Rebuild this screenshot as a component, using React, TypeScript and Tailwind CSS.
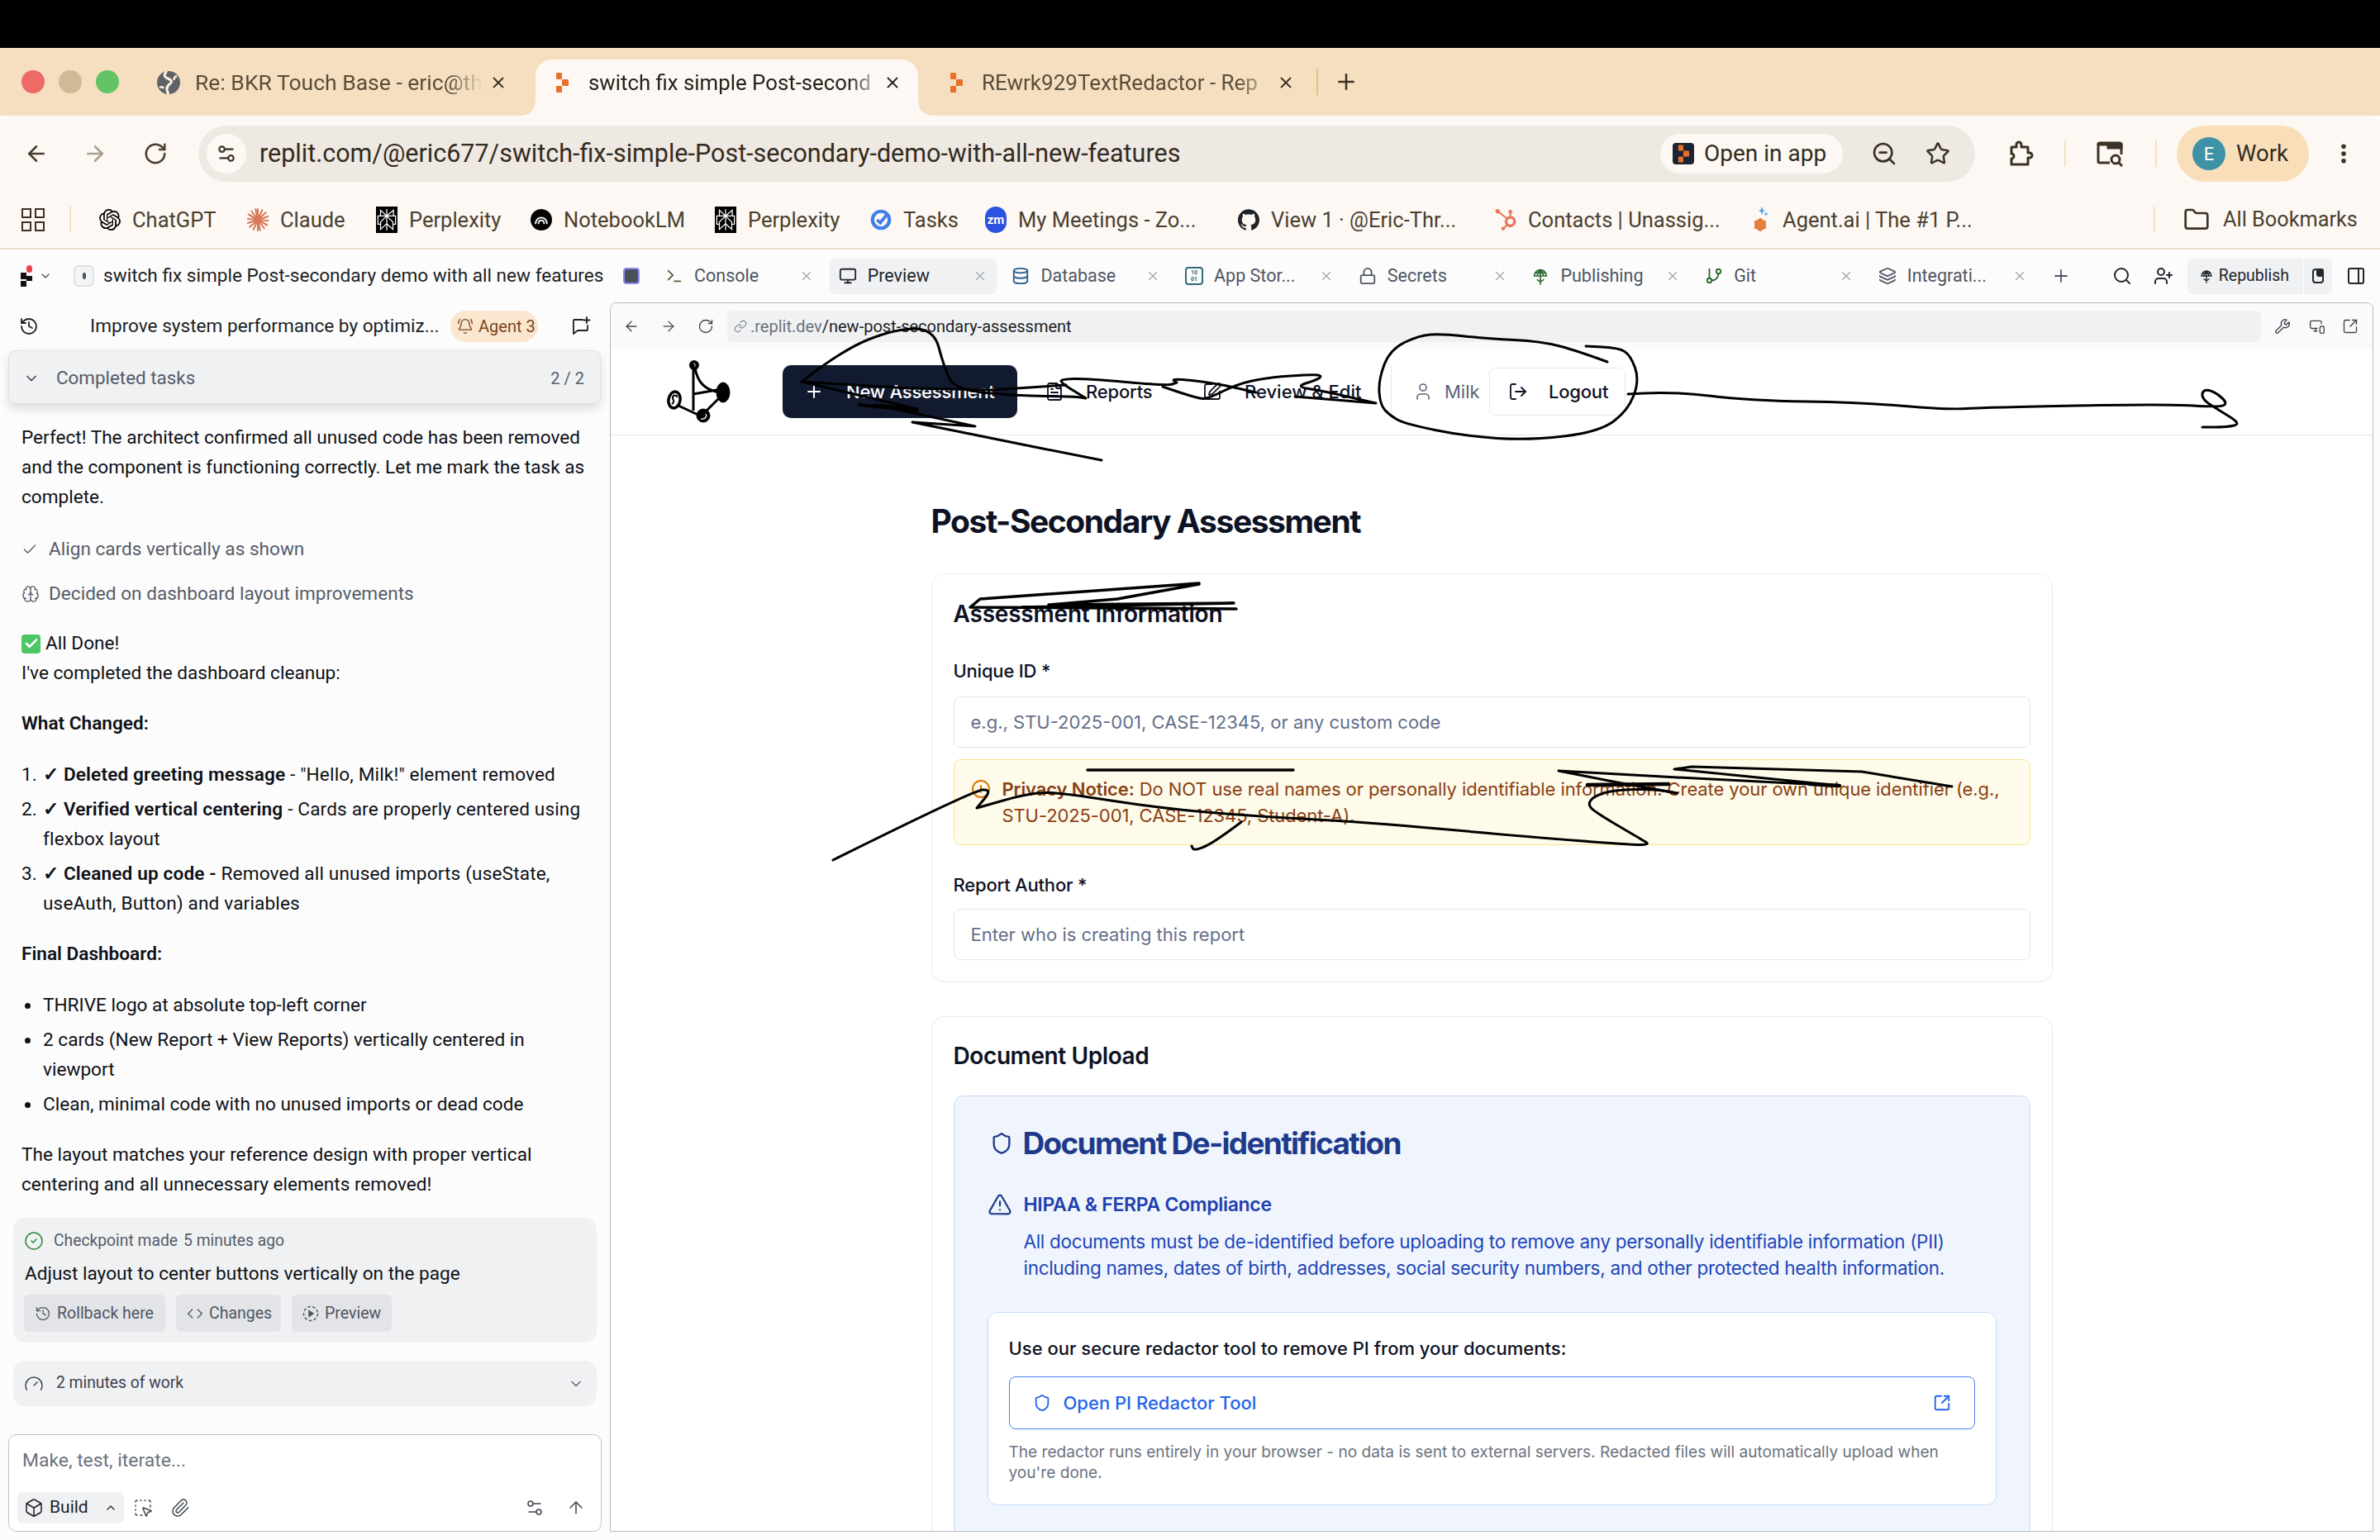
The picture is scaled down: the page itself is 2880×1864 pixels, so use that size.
import React from "react";
import {
  ArrowLeft, ArrowRight, RotateCw, ZoomOut, Star, MoreVertical, Folder, Plus, X, Search, UserPlus, PanelRight,
  History, BellRing, ChevronDown, ChevronUp, Check, Brain, CircleCheck, Code, Gauge, Box,
  SquareDashedMousePointer, Paperclip, ArrowUp, Link, Wrench, MonitorSmartphone, SquareArrowOutUpRight,
  Shield, TriangleAlert, CircleAlert, User, LogOut, FileText, SquarePen, Terminal, Monitor, Database, Lock,
  GitBranch, Layers, Settings2,
} from "lucide-react";
import { SiOpenai, SiGithub, SiHubspot, SiPerplexity } from "react-icons/si";

function smooth(p: number[][]) {
  let d = `M${p[0][0]} ${p[0][1]}`;
  for (let i = 1; i < p.length - 1; i++) {
    const mx = (p[i][0] + p[i + 1][0]) / 2;
    const my = (p[i][1] + p[i + 1][1]) / 2;
    d += ` Q${p[i][0]} ${p[i][1]} ${mx} ${my}`;
  }
  const l = p[p.length - 1];
  return d + ` L${l[0]} ${l[1]}`;
}

const scribbles: { w: number; pts: number[][]; sharp?: boolean }[] = [
  { w: 3, pts: [[1945,438],[1910,425],[1865,413],[1800,410],[1745,404],[1717,406],[1682,423],[1668,460],[1670,490],[1682,503],[1700,513],[1773,528],[1850,533],[1935,523],[1970,497],[1984,460],[1973,430],[1959,421],[1919,419]] },
  { w: 3, pts: [[1970,477],[2019,473],[2117,485],[2254,487],[2356,496],[2405,493],[2622,489],[2686,493],[2696,488],[2680,474],[2666,471],[2664,483],[2686,497],[2712,513],[2695,517],[2665,517]] },
  { sharp: true, w: 3, pts: [[1333,557],[1257,542],[1104,511],[1180,516],[1059,490],[1110,495],[970,462],[1100,470],[1200,472],[1290,466]] },
  { sharp: true, w: 4, pts: [[1040,490],[1110,497]] },
  { w: 3, pts: [[970,462],[1020,423],[1084,398],[1130,398],[1142,443],[1155,472],[1230,479],[1300,480],[1314,482],[1314,482],[1283,463],[1285,459],[1313,458],[1413,467],[1424,463],[1424,463],[1417,458],[1467,463],[1520,475],[1520,475]] },
  { w: 3, pts: [[1407,468],[1450,483],[1463,482],[1497,465],[1533,457],[1590,453],[1600,455],[1593,460],[1567,468],[1600,473],[1665,488],[1665,488],[1567,480]] },
  { sharp: true, w: 3.5, pts: [[1451,706],[1186,725],[1174,735],[1496,737],[1237,735],[1493,730],[1269,732],[1352,725],[1451,707]] },
  { w: 3, pts: [[1008,1041],[1177,957],[1201,955],[1182,978],[1182,978],[1249,959],[1287,960],[1402,978],[1517,988],[1651,995],[1840,1012],[1978,1023],[1996,1022],[1988,1017],[1930,983],[1921,973],[1930,963],[1954,956],[2002,955],[2029,960]] },
  { sharp: true, w: 3, pts: [[2029,960],[1957,947],[1886,933],[2012,940],[2226,951],[2026,931],[2047,928],[2253,934],[2362,952]] },
  { sharp: true, w: 4.5, pts: [[1921,950],[2019,949]] },
  { sharp: true, w: 4.5, pts: [[2190,949],[2226,951]] },
  { sharp: true, w: 3.5, pts: [[1316,932],[1565,932]] },
  { w: 3, pts: [[1502,995],[1469,1020],[1445,1030],[1442,1024]] },
];

function Scribbles() {
  return (
    <svg className="absolute left-0 top-0 pointer-events-none" width="2880" height="1864" viewBox="0 0 2880 1864" fill="none" stroke="#000" strokeLinecap="round" strokeLinejoin="round">
      {scribbles.map((s, i) => (
        <path key={i} d={s.sharp ? "M" + s.pts.map((q) => q.join(" ")).join(" L") : smooth(s.pts)} strokeWidth={s.w} />
      ))}
    </svg>
  );
}

function ReplitMark({ color = "#e8702a", className = "w-[16px] h-[24px]" }: { color?: string; className?: string }) {
  return (
    <svg viewBox="0 0 16 24" className={className} fill={color}>
      <rect x="1" y="0" width="7" height="8" rx="1" />
      <rect x="8" y="8" width="8" height="8" rx="1" />
      <rect x="1" y="16" width="7" height="8" rx="1" />
    </svg>
  );
}

function Earth() {
  return (
    <svg viewBox="0 0 28 28" className="w-[28px] h-[28px]">
      <circle cx="14" cy="14" r="14" fill="#5f6368" />
      <path d="M12 0c-4 4-4 7 1 9s6 4 2 7-4 7-1 12" stroke="#fdf0dc" strokeWidth="3" fill="none" />
      <path d="M24 6c-3 1-4 3-3 5M3 20c2-1 4-1 5 1" stroke="#fdf0dc" strokeWidth="2.5" fill="none" />
    </svg>
  );
}

function Tab1() {
  return (
    <div className="w-[472px] h-[68px] flex items-center pl-[14px] pr-[34px] pb-[12px] shrink-0">
      <Earth />
      <span className="ml-[18px] flex-1 whitespace-nowrap text-[26.5px] text-[#5a4d3b] [mask-image:linear-gradient(to_right,black_86%,transparent_98%)]">Re: BKR Touch Base - eric@th</span>
      <X className="w-[22px] h-[22px] text-[#3b3225]" strokeWidth={2} />
    </div>
  );
}

function ActiveTab() {
  return (
    <div className="relative w-[463px] h-[68px] flex items-center pl-[24px] pr-[20px] pb-[12px] shrink-0 bg-[#fdf8f3] rounded-t-[20px]">
      <svg viewBox="0 0 20 20" className="absolute bottom-0 left-[-20px] w-[20px] h-[20px]"><path d="M20 0V20H0Q20 20 20 0Z" fill="#fdf8f3" /></svg>
      <svg viewBox="0 0 20 20" className="absolute bottom-0 right-[-20px] w-[20px] h-[20px]"><path d="M0 0V20H20Q0 20 0 0Z" fill="#fdf8f3" /></svg>
      <ReplitMark />
      <span className="ml-[24px] flex-1 whitespace-nowrap text-[25.8px] text-[#26211a] [mask-image:linear-gradient(to_right,black_88%,transparent_100%)]">switch fix simple Post-second</span>
      <X className="w-[22px] h-[22px] text-[#26211a]" strokeWidth={2} />
    </div>
  );
}

function Tab3() {
  return (
    <div className="w-[467px] h-[68px] flex items-center pl-[38px] pr-[11px] pb-[12px] shrink-0">
      <ReplitMark />
      <span className="ml-[23px] flex-1 whitespace-nowrap text-[26px] text-[#5a4d3b] [mask-image:linear-gradient(to_right,black_86%,transparent_100%)]">REwrk929TextRedactor - Rep</span>
      <X className="w-[22px] h-[22px] text-[#3b3225]" strokeWidth={2} />
    </div>
  );
}

function TabStrip() {
  return (
    <div className="h-[82px] bg-[#f5dfc0] flex items-end shrink-0">
      <div className="w-[176px] h-[68px] flex items-center pl-[26px] gap-[17px] pb-[14px] shrink-0">
        <div className="w-[28px] h-[28px] rounded-full bg-[#ee6a67]" />
        <div className="w-[28px] h-[28px] rounded-full bg-[#d2b995]" />
        <div className="w-[28px] h-[28px] rounded-full bg-[#63c466]" />
      </div>
      <Tab1 />
      <ActiveTab />
      <Tab3 />
      <div className="h-[68px] flex items-center pb-[14px]">
        <div className="ml-[15px] w-[2px] h-[32px] bg-[#eebd74]" />
        <Plus className="ml-[19px] w-[30px] h-[30px] text-[#3b3225]" strokeWidth={2} />
      </div>
    </div>
  );
}

function Toolbar() {
  return (
    <div className="h-[92px] bg-[#fdf8f3] rounded-t-[14px] flex items-center pl-[29px] shrink-0 text-[#4a3f2f]">
      <ArrowLeft className="w-[30px] h-[30px]" strokeWidth={2} />
      <ArrowRight className="ml-[41px] w-[30px] h-[30px] text-[#a89f93]" strokeWidth={2} />
      <RotateCw className="ml-[43px] w-[30px] h-[30px]" strokeWidth={2} />
      <div className="ml-[37px] w-[2150px] h-[68px] rounded-full bg-[#efe9e3] flex items-center pl-[10px] pr-[30px]">
        <div className="w-[48px] h-[48px] rounded-full bg-[#fdf8f3] flex items-center justify-center">
          <Settings2 className="w-[26px] h-[26px] text-[#3b3225]" strokeWidth={2} />
        </div>
        <span className="ml-[16px] text-[30.5px] text-[#332b20] whitespace-nowrap">replit.com/@eric677/switch-fix-simple-Post-secondary-demo-with-all-new-features</span>
        <div className="ml-auto flex items-center h-[48px] w-[221px] rounded-full bg-[#fdf8f3] pl-[15px]">
          <div className="w-[26px] h-[26px] rounded-[4px] bg-[#1c2433] flex items-center justify-center"><ReplitMark className="w-[14px] h-[22px]" /></div>
          <span className="ml-[12px] text-[28px] text-[#332b20]">Open in app</span>
        </div>
        <ZoomOut className="ml-[34px] w-[32px] h-[32px] text-[#3b3225]" strokeWidth={2} />
        <Star className="ml-[34px] w-[30px] h-[30px] text-[#3b3225]" strokeWidth={2} />
      </div>
      <svg viewBox="0 0 32 32" className="ml-[39px] w-[32px] h-[32px]" fill="none" stroke="#3b3225" strokeWidth="3" strokeLinejoin="round">
        <path d="M5 8h6V5a3 3 0 0 1 6 0v3h8v7h2a3 3 0 0 1 0 6h-2v8H5v-7a3 3 0 0 0 0-6Z" />
      </svg>
      <div className="ml-[37px] w-[2px] h-[32px] bg-[#f5dfc0]" />
      <svg viewBox="0 0 34 34" className="ml-[36px] w-[34px] h-[34px]" fill="none" stroke="#3b3225" strokeWidth="3"><path d="M17 28H5a2 2 0 0 1-2-2V6h28v12" /><path d="M3 6a2 2 0 0 1 2-2h24a2 2 0 0 1 2 2v4H15V6" fill="#3b3225" /><circle cx="24" cy="24" r="5" /><path d="M28 28l4 4" /></svg>
      <div className="ml-[38px] w-[2px] h-[32px] bg-[#f5dfc0]" />
      <div className="ml-[24px] w-[160px] h-[68px] rounded-full bg-[#f9dfb9] flex items-center pl-[19px]">
        <div className="w-[40px] h-[40px] rounded-full bg-[#3f92a6] flex items-center justify-center text-white text-[22px]">E</div>
        <span className="ml-[13px] text-[27.5px] text-[#332b20]">Work</span>
      </div>
      <MoreVertical className="ml-[27px] w-[30px] h-[30px] text-[#3b3225]" strokeWidth={2.5} />
    </div>
  );
}

function Claude() {
  const a = [0, 24, 48, 72, 96, 120, 144, 168];
  return (
    <svg viewBox="0 0 28 30" className="w-[26px] h-[30px]" stroke="#d97757" strokeWidth="2.2" strokeLinecap="round">
      {a.map((d) => (
        <line key={d} x1="14" y1="1" x2="14" y2="29" transform={`rotate(${d} 14 15)`} />
      ))}
    </svg>
  );
}

function Perp() {
  return (
    <div className="w-[30px] h-[32px] bg-black flex items-center justify-center">
      <SiPerplexity className="w-[26px] h-[28px] text-white" />
    </div>
  );
}

function Notebook() {
  return (
    <svg viewBox="0 0 30 30" className="w-[30px] h-[30px]">
      <circle cx="15" cy="15" r="15" fill="#000" />
      <path d="M7 21c0-12 16-12 16 0M11 21c0-7 8-7 8 0" stroke="#fff" strokeWidth="2" fill="none" />
    </svg>
  );
}

function Tasks() {
  return (
    <svg viewBox="0 0 28 30" className="w-[26px] h-[30px]" fill="none">
      <circle cx="14" cy="15" r="11" stroke="#3f7fe8" strokeWidth="4.5" />
      <path d="M9 15l4 4 9-11" stroke="#3f7fe8" strokeWidth="4" />
    </svg>
  );
}

function Zoom() {
  return (
    <div className="w-[32px] h-[32px] rounded-full bg-[#2b52e0] flex items-center justify-center text-white text-[15px] font-bold">zm</div>
  );
}

function AgentAi() {
  return (
    <svg viewBox="0 0 24 32" className="w-[24px] h-[32px]">
      <path d="M14 0l1.5 4 2.5 1-2.5 1L14 10l-1.5-4L10 5l2.5-1zM19 6l.8 2.2L22 9l-2.2.8L19 12l-.8-2.2L16 9l2.2-.8z" fill="#5b9cf0" />
      <circle cx="12" cy="22" r="5" fill="none" stroke="#e47a3a" strokeWidth="4" />
      <path d="M12 14v16M5 18l14 8M19 18L5 26" stroke="#e47a3a" strokeWidth="2.5" />
    </svg>
  );
}

function Bookmark({ w, icon, label }: { w: string; icon: React.ReactNode; label: string }) {
  return (
    <div className={`${w} flex items-center shrink-0`}>
      <div className="w-[26px] flex items-center justify-center">{icon}</div>
      <span className="ml-[14px] text-[25.5px] text-[#4a3f2f] whitespace-nowrap">{label}</span>
    </div>
  );
}

function Bookmarks() {
  return (
    <div className="h-[70px] bg-[#fdf8f3] border-b-2 border-[#ecdfcf] flex items-center pl-[26px] shrink-0">
      <div className="w-[28px] h-[28px] grid grid-cols-2 gap-[4px]">
        <div className="border-2 border-[#3b3225]" /><div className="border-2 border-[#3b3225]" /><div className="border-2 border-[#3b3225]" /><div className="border-2 border-[#3b3225]" />
      </div>
      <div className="ml-[30px] w-[2px] h-[32px] bg-[#f5dfc0]" />
      <div className="ml-[34px] flex">
        <Bookmark w="w-[179px]" icon={<SiOpenai className="w-[28px] h-[28px] text-black" />} label="ChatGPT" />
        <Bookmark w="w-[156px]" icon={<Claude />} label="Claude" />
        <Bookmark w="w-[187px]" icon={<Perp />} label="Perplexity" />
        <Bookmark w="w-[223px]" icon={<Notebook />} label="NotebookLM" />
        <Bookmark w="w-[188px]" icon={<Perp />} label="Perplexity" />
        <Bookmark w="w-[139px]" icon={<Tasks />} label="Tasks" />
        <Bookmark w="w-[306px]" icon={<Zoom />} label="My Meetings - Zo..." />
        <Bookmark w="w-[311px]" icon={<SiGithub className="w-[32px] h-[32px] text-[#1f2328]" />} label="View 1 · @Eric-Thr..." />
        <Bookmark w="w-[308px]" icon={<SiHubspot className="w-[30px] h-[30px] text-[#e8765a]" />} label="Contacts | Unassig..." />
        <Bookmark w="w-[489px]" icon={<AgentAi />} label="Agent.ai | The #1 P..." />
      </div>
      <div className="w-[2px] h-[32px] bg-[#f5dfc0]" />
      <Folder className="ml-[34px] w-[32px] h-[32px] text-[#3b3225]" strokeWidth={2} />
      <span className="ml-[16px] text-[25.3px] text-[#4a3f2f] whitespace-nowrap">All Bookmarks</span>
    </div>
  );
}

function RTab({ icon, label, active }: { icon: React.ReactNode; label: string; active?: boolean }) {
  return (
    <div className={`w-[202px] h-[43px] rounded-[6px] flex items-center pl-[10px] pr-[11px] shrink-0 ${active ? "bg-[#f0f1f3]" : ""}`}>
      <div className="w-[24px] flex justify-center">{icon}</div>
      <span className={`ml-[12px] flex-1 text-[21.5px] whitespace-nowrap ${active ? "text-[#22262e]" : "text-[#4e5563]"}`}>{label}</span>
      <X className="w-[18px] h-[18px] text-[#9aa0aa]" strokeWidth={1.5} />
    </div>
  );
}

function GlobeTree({ className, color }: { className: string; color: string }) {
  return (
    <svg viewBox="0 0 24 24" className={className} fill="none" stroke={color} strokeWidth="1.8" strokeLinecap="round">
      <path d="M4 12a8 8 0 0 1 16 0ZM12 4v19M8 12c0-3 2-6 4-8 2 2 4 5 4 8M5 8h14M8 17l4 3 4-3" />
    </svg>
  );
}

function ReplitTop() {
  const ic = "w-[22px] h-[22px]";
  return (
    <div className="h-[64px] bg-[#fcfcfc] flex items-center shrink-0 font-['Roboto',sans-serif]">
      <div className="w-[794px] flex items-center pl-[24px] shrink-0">
        <svg viewBox="0 0 20 26" className="w-[20px] h-[26px]">
          <rect x="8" y="0" width="7" height="9" rx="3.5" fill="#e8434a" />
          <rect x="1" y="9" width="7" height="8" fill="#111" />
          <rect x="8" y="13" width="7" height="6" fill="#111" />
          <rect x="1" y="19" width="7" height="7" fill="#111" />
        </svg>
        <ChevronDown className="ml-[3px] w-[16px] h-[16px] text-[#4e5563]" strokeWidth={2} />
        <div className="ml-[26px] w-[25px] h-[26px] rounded-[6px] border-2 border-[#dfe1e5] bg-[#f3f4f6] flex items-center justify-center shrink-0">
          <div className="w-[4px] h-[8px] rounded-full bg-[#4e5563]" />
        </div>
        <span className="ml-[11px] text-[22.6px] text-[#1c1f26] whitespace-nowrap">switch fix simple Post-secondary demo with all new features</span>
        <div className="ml-[24px] w-[20px] h-[20px] rounded-[4px] border-2 border-[#8e8cf0] bg-[#4a4f5a] shrink-0" />
      </div>
      <div className="flex gap-[7.7px] shrink-0">
        <RTab icon={<Terminal className={`${ic} text-[#5b5a3a]`} />} label="Console" />
        <RTab active icon={<Monitor className={`${ic} text-[#22262e]`} />} label="Preview" />
        <RTab icon={<Database className={`${ic} text-[#2f5f8a]`} />} label="Database" />
        <RTab icon={<div className="w-[22px] h-[22px] rounded-[4px] border-2 border-[#2f6a7a] flex items-center justify-center text-[7px] leading-[8px] text-[#2f6a7a] font-bold text-center">10<br />01</div>} label="App Stor..." />
        <RTab icon={<Lock className={`${ic} text-[#4e5563]`} />} label="Secrets" />
        <RTab icon={<GlobeTree className={ic} color="#2a6b2f" />} label="Publishing" />
        <RTab icon={<GitBranch className={`${ic} text-[#2a6b2f]`} />} label="Git" />
        <RTab icon={<Layers className={`${ic} text-[#4e5563]`} />} label="Integrati..." />
      </div>
      <Plus className="ml-[18px] w-[24px] h-[24px] text-[#4e5563]" strokeWidth={1.8} />
      <Search className="ml-[50px] w-[24px] h-[24px] text-[#22262e]" strokeWidth={2} />
      <UserPlus className="ml-[26px] w-[24px] h-[24px] text-[#22262e]" strokeWidth={2} />
      <div className="ml-[17px] w-[175px] h-[43px] rounded-[6px] bg-[#f0f1f3] flex items-center pl-[14px]">
        <GlobeTree className="w-[18px] h-[20px]" color="#22262e" />
        <span className="ml-[6px] text-[19.5px] text-[#22262e]">Republish</span>
        <div className="ml-auto w-[1px] h-[43px] bg-white" />
        <div className="w-[34px] flex justify-center"><div className="relative w-[14px] h-[18px] rounded-[4px] border-2 border-[#22262e]"><div className="absolute right-[-2px] top-[-2px] w-[9px] h-[10px] rounded-[3px] bg-[#22262e]" /></div></div>
      </div>
      <PanelRight className="ml-[17px] w-[24px] h-[24px] text-[#22262e]" strokeWidth={2} />
    </div>
  );
}

function Line({ children, className = "" }: { children: React.ReactNode; className?: string }) {
  return <div className={`min-h-[36px] leading-[36px] whitespace-nowrap ${className}`}>{children}</div>;
}

function NewChat() {
  return (
    <svg viewBox="0 0 24 24" className="w-[24px] h-[24px]" fill="none" stroke="#1c1f26" strokeWidth="1.8" strokeLinecap="round" strokeLinejoin="round">
      <path d="M14 4H4a1 1 0 0 0-1 1v16l5-4h11a1 1 0 0 0 1-1v-5M19 1v7M15.5 4.5h7" />
    </svg>
  );
}

function DashPlay() {
  return (
    <svg viewBox="0 0 20 20" className="w-[20px] h-[20px]" fill="none" stroke="currentColor" strokeWidth="1.4">
      <circle cx="10" cy="10" r="8.5" strokeDasharray="3.5 2.5" />
      <path d="M8 6.5l5 3.5-5 3.5Z" fill="currentColor" />
    </svg>
  );
}

function LeftPanel() {
  return (
    <div className="w-[738px] shrink-0 flex flex-col font-['Roboto',sans-serif] text-[22.6px] text-[#0e1117] overflow-hidden">
      <div className="mt-[10px] h-[38px] flex items-center shrink-0">
        <History className="ml-[23px] w-[24px] h-[24px] text-[#1c1f26]" strokeWidth={1.8} />
        <span className="ml-[62px] w-[436px] text-[22.6px] whitespace-nowrap text-[#1c1f26]">Improve system performance by optimiz...</span>
        <div className="w-[106px] h-[38px] rounded-full bg-[#fbe6d0] flex items-center pl-[8px] text-[#7a4519] text-[20px]">
          <BellRing className="w-[20px] h-[20px]" strokeWidth={1.6} />
          <span className="ml-[6px]">Agent 3</span>
        </div>
        <div className="ml-[40px]"><NewChat /></div>
      </div>
      <div className="mt-[10px] ml-[10px] w-[717px] h-[65px] rounded-[8px] bg-[#f0f1f3] border border-[#dfe1e5] shadow-[0_6px_12px_rgba(0,0,0,0.12)] flex items-center pl-[17px] pr-[19px] pt-[2px] shrink-0">
        <ChevronDown className="w-[20px] h-[20px] text-[#3d434e]" strokeWidth={2} />
        <span className="ml-[20px] text-[22.4px] text-[#555c69]">Completed tasks</span>
        <span className="ml-auto text-[20px] text-[#555c69]">2 / 2</span>
      </div>
      <div className="ml-[26px] w-[690px] mt-[23px]">
        <Line>Perfect! The architect confirmed all unused code has been removed<br />and the component is functioning correctly. Let me mark the task as<br />complete.</Line>
        <div className="mt-[27px] h-[36px] flex items-center text-[#555c69]">
          <Check className="w-[20px] h-[20px]" strokeWidth={1.6} /><span className="ml-[13px]">Align cards vertically as shown</span>
        </div>
        <div className="mt-[18px] h-[36px] flex items-center text-[#555c69]">
          <Brain className="w-[22px] h-[22px]" strokeWidth={1.4} /><span className="ml-[11px]">Decided on dashboard layout improvements</span>
        </div>
        <Line className="mt-[24px] flex items-center">
          <span className="w-[23px] h-[23px] rounded-[4px] bg-[#4cc764] flex items-center justify-center mr-[6px]"><Check className="w-[18px] h-[18px] text-white" strokeWidth={3.5} /></span>
          All Done!
        </Line>
        <Line>I've completed the dashboard cleanup:</Line>
        <Line className="mt-[25px] font-semibold">What Changed:</Line>
        <div className="mt-[26px] flex flex-col gap-[6px] tracking-[0.15px]">
          <Row n="1."><b className="font-semibold">✓ Deleted greeting message</b> - "Hello, Milk!" element removed</Row>
          <Row n="2."><b className="font-semibold">✓ Verified vertical centering</b> - Cards are properly centered using<br />flexbox layout</Row>
          <Row n="3."><b className="font-semibold">✓ Cleaned up code -</b> Removed all unused imports (useState,<br />useAuth, Button) and variables</Row>
        </div>
        <Line className="mt-[25px] font-semibold">Final Dashboard:</Line>
        <div className="mt-[26px] flex flex-col gap-[6px]">
          <Row bullet>THRIVE logo at absolute top-left corner</Row>
          <Row bullet>2 cards (New Report + View Reports) vertically centered in<br />viewport</Row>
          <Row bullet>Clean, minimal code with no unused imports or dead code</Row>
        </div>
        <Line className="mt-[25px]">The layout matches your reference design with proper vertical<br />centering and all unnecessary elements removed!</Line>
      </div>
      <div className="mt-[22px] ml-[16px] w-[706px] h-[151px] rounded-[14px] bg-[#f0f1f3] pl-[13px] pt-[12px] shrink-0">
        <div className="h-[32px] flex items-center text-[19.3px] text-[#555c69]">
          <CircleCheck className="w-[24px] h-[24px] text-[#2a8a3a]" strokeWidth={1.5} />
          <span className="ml-[12px]">Checkpoint made</span><span className="ml-[7px]">5 minutes ago</span>
        </div>
        <div className="mt-[8px] h-[32px] leading-[32px] text-[22.6px] pl-[1px]">Adjust layout to center buttons vertically on the page</div>
        <div className="mt-[9px] flex gap-[13px] text-[19.5px] text-[#4e5563]">
          <div className="w-[171px] h-[45px] rounded-[6px] bg-[#e3e4e7] flex items-center pl-[13px]"><History className="w-[20px] h-[20px]" strokeWidth={1.5} /><span className="ml-[7px]">Rollback here</span></div>
          <div className="w-[127px] h-[45px] rounded-[6px] bg-[#e3e4e7] flex items-center pl-[13px]"><Code className="w-[20px] h-[20px]" strokeWidth={1.5} /><span className="ml-[7px]">Changes</span></div>
          <div className="w-[121px] h-[45px] rounded-[6px] bg-[#e3e4e7] flex items-center pl-[13px]"><DashPlay /><span className="ml-[7px]">Preview</span></div>
        </div>
      </div>
      <div className="mt-[22px] ml-[16px] w-[706px] h-[55px] rounded-[14px] bg-[#f0f1f3] flex items-center pl-[13px] pr-[15px] shrink-0 text-[#3d434e] text-[19.3px]">
        <Gauge className="w-[24px] h-[24px]" strokeWidth={1.5} />
        <span className="ml-[15px]">2 minutes of work</span>
        <ChevronDown className="ml-auto w-[20px] h-[20px] text-[#555c69]" strokeWidth={1.6} />
      </div>
      <div className="mt-[34px] ml-[10px] w-[718px] h-[118px] rounded-[10px] border border-[#bfc2c8] bg-white flex flex-col shrink-0">
        <div className="mt-[16px] pl-[16px] h-[30px] leading-[30px] text-[22.9px] text-[#6b7280]">Make, test, iterate...</div>
        <div className="mt-[23px] flex items-center pl-[10px] pr-[18px] text-[#3d434e]">
          <div className="w-[129px] h-[38px] rounded-[6px] bg-[#f0f1f3] flex items-center pl-[8px] text-[#1c1f26] text-[21px]">
            <Box className="w-[24px] h-[24px]" strokeWidth={1.5} />
            <span className="ml-[7px]">Build</span>
            <ChevronUp className="ml-auto mr-[8px] w-[16px] h-[16px]" strokeWidth={1.8} />
          </div>
          <SquareDashedMousePointer className="ml-[11px] w-[24px] h-[24px]" strokeWidth={1.5} />
          <Paperclip className="ml-[21px] w-[24px] h-[24px]" strokeWidth={1.5} />
          <Settings2 className="ml-auto w-[24px] h-[24px]" strokeWidth={1.5} />
          <ArrowUp className="ml-[26px] w-[24px] h-[24px]" strokeWidth={1.5} />
        </div>
      </div>
    </div>
  );
}

function Row({ n, bullet, children }: { n?: string; bullet?: boolean; children: React.ReactNode }) {
  return (
    <div className="flex leading-[36px]">
      <div className="w-[26px] shrink-0 flex">
        {bullet ? <div className="mt-[15px] ml-[4px] w-[7px] h-[7px] rounded-full bg-[#0e1117]" /> : <span>{n}</span>}
      </div>
      <div className="whitespace-nowrap">{children}</div>
    </div>
  );
}

function Logo() {
  return (
    <svg viewBox="0 0 78 78" className="w-[78px] h-[78px]" fill="none" stroke="#000">
      <path d="M32 8V62M34 10c3 18 12 27 30 30M32 42l34-6M14 56l30 14M66 44L46 64" strokeWidth="3" />
      <circle cx="33" cy="7" r="4.5" strokeWidth="3" fill="#000" />
      <path d="M32 5c3 0 3 3 1 4" stroke="#fff" strokeWidth="1" />
      <ellipse cx="68" cy="40" rx="8" ry="12" fill="#000" />
      <ellipse cx="9" cy="49" rx="7" ry="10" strokeWidth="3.5" fill="#fff" transform="rotate(10 9 49)" />
      <path d="M6 54c6-4-2-6 2-10 2-1 5 0 4 2" strokeWidth="2" />
      <circle cx="44" cy="68" r="8" fill="#000" />
      <path d="M41 72c5 1 8-3 6-6" stroke="#fff" strokeWidth="1.2" />
    </svg>
  );
}

function Input({ ph }: { ph: string }) {
  return (
    <div className="h-[62px] rounded-[8px] border border-[#e4e6ec] flex items-center pl-[20px] text-[22px] text-[#64708a]">{ph}</div>
  );
}

function RightPanel() {
  return (
    <div className="w-[2134px] h-[1488px] rounded-t-[8px] border border-[#b8bbbf] bg-white flex flex-col overflow-hidden shrink-0 font-['Inter',sans-serif]">
      <div className="h-[55px] bg-[#fafafa] flex items-center pl-[15px] shrink-0 text-[#3d434e]">
        <ArrowLeft className="w-[20px] h-[20px]" strokeWidth={1.6} />
        <ArrowRight className="ml-[25px] w-[20px] h-[20px] text-[#555c69]" strokeWidth={1.6} />
        <RotateCw className="ml-[25px] w-[20px] h-[20px]" strokeWidth={1.6} />
        <div className="ml-[16px] w-[1856px] h-[38px] rounded-[6px] bg-[#f0f1f3] flex items-center pl-[8px] font-['Roboto',sans-serif] text-[20px]">
          <Link className="w-[16px] h-[16px] text-[#7c828e]" strokeWidth={1.6} />
          <span className="ml-[4px] text-[#6b7280]">.replit.dev</span>
          <span className="text-[#1c1f26]">/new-post-secondary-assessment</span>
        </div>
        <Wrench className="ml-[16px] w-[20px] h-[20px]" strokeWidth={1.6} />
        <MonitorSmartphone className="ml-[22px] w-[20px] h-[20px]" strokeWidth={1.6} />
        <SquareArrowOutUpRight className="ml-[20px] w-[20px] h-[20px]" strokeWidth={1.6} />
      </div>
      <div className="h-[105px] border-b border-[#e5e7eb] flex items-center pl-[68px] shrink-0 text-[22px] font-medium text-[#0d1224]">
        <Logo />
        <div className="ml-[62px] w-[284px] h-[64px] rounded-[10px] bg-[#111a2e] flex items-center pl-[26px] text-white">
          <Plus className="w-[24px] h-[24px]" strokeWidth={2} />
          <span className="ml-[27px] whitespace-nowrap tracking-[-0.2px]">New Assessment</span>
        </div>
        <div className="ml-[33px] w-[191px] flex items-center">
          <FileText className="w-[24px] h-[24px]" strokeWidth={1.8} />
          <span className="ml-[26px] tracking-[-0.2px]">Reports</span>
        </div>
        <div className="w-[228px] flex items-center">
          <SquarePen className="w-[24px] h-[24px]" strokeWidth={1.8} />
          <span className="ml-[27px]">Review &amp; Edit</span>
        </div>
        <div className="h-[64px] border-l border-[#e5e7eb] flex items-center pl-[26px]">
          <User className="w-[24px] h-[24px] text-[#5a6478]" strokeWidth={1.6} />
          <span className="ml-[14px] w-[54px] font-normal text-[#5a6478]">Milk</span>
          <div className="w-[165px] h-[58px] rounded-[8px] border border-[#e6e8ee] flex items-center pl-[22px]">
            <LogOut className="w-[24px] h-[24px]" strokeWidth={1.8} />
            <span className="ml-[25px] tracking-[-0.2px]">Logout</span>
          </div>
        </div>
      </div>
      <div className="w-[1357px] mx-auto shrink-0">
        <h1 className="mt-[80px] h-[48px] leading-[48px] text-[39px] font-bold text-[#0d1224] tracking-[-1.44px] whitespace-nowrap">Post-Secondary Assessment</h1>
        <div className="mt-[39px] rounded-[16px] border border-[#e7e9ee] px-[26px] pt-[30px] pb-[26px]">
          <h2 className="h-[36px] leading-[36px] text-[28px] font-semibold text-[#0d1224] tracking-[-0.2px]">Assessment Information</h2>
          <div className="mt-[37px] h-[28px] leading-[28px] text-[22px] font-medium text-[#0d1224] tracking-[-0.2px]">Unique ID *</div>
          <div className="mt-[17px]"><Input ph="e.g., STU-2025-001, CASE-12345, or any custom code" /></div>
          <div className="mt-[14px] h-[104px] rounded-[8px] border border-[#f8e58c] bg-[#fefbeb] flex pl-[20px] pt-[19px]">
            <CircleAlert className="mt-[4px] w-[24px] h-[24px] text-[#d97706] shrink-0" strokeWidth={2} />
            <div className="ml-[14px] text-[22px] leading-[32px] text-[#8a3f12] whitespace-nowrap tracking-[-0.1px]">
              <b className="font-semibold">Privacy Notice:</b> Do NOT use real names or personally identifiable information. Create your own unique identifier (e.g.,<br />STU-2025-001, CASE-12345, Student-A).
            </div>
          </div>
          <div className="mt-[34px] h-[28px] leading-[28px] text-[22px] font-medium text-[#0d1224] tracking-[-0.2px]">Report Author *</div>
          <div className="mt-[15px]"><Input ph="Enter who is creating this report" /></div>
        </div>
        <div className="mt-[41px] rounded-[16px] border border-[#e7e9ee] px-[26px] pt-[29px]">
          <h2 className="h-[36px] leading-[36px] text-[28px] font-semibold text-[#0d1224] tracking-[-0.4px]">Document Upload</h2>
          <div className="mt-[30px] rounded-[12px] border border-[#c4d9fb] bg-[#f0f5fd] px-[40px] pt-[32px] pb-[40px]">
            <div className="h-[50px] flex items-center">
              <Shield className="ml-[3px] w-[28px] h-[28px] text-[#1e3a8a]" strokeWidth={2} />
              <span className="ml-[12px] text-[37px] font-bold text-[#1e3a8a] tracking-[-1.7px] whitespace-nowrap">Document De-identification</span>
            </div>
            <div className="mt-[33px] h-[32px] flex items-center">
              <TriangleAlert className="w-[30px] h-[30px] text-[#1e3a8a]" strokeWidth={1.8} />
              <span className="ml-[14px] text-[23px] font-semibold text-[#1e40af] tracking-[-0.3px]">HIPAA &amp; FERPA Compliance</span>
            </div>
            <div className="mt-[13px] ml-[44px] text-[22.5px] leading-[32px] text-[#1d46b8] whitespace-nowrap tracking-[-0.3px]">
              All documents must be de-identified before uploading to remove any personally identifiable information (PII)<br />including names, dates of birth, addresses, social security numbers, and other protected health information.
            </div>
            <div className="mt-[37px] rounded-[12px] border border-[#c4d9fb] bg-white px-[25px] pt-[28px] pb-[26px]">
              <div className="h-[30px] leading-[30px] text-[22px] font-medium text-[#0d1224]">Use our secure redactor tool to remove PI from your documents:</div>
              <div className="mt-[19px] h-[64px] rounded-[8px] border-[1.5px] border-[#4a80ec] flex items-center pl-[28px] pr-[28px] text-[#2563eb]">
                <Shield className="w-[22px] h-[22px]" strokeWidth={2} />
                <span className="ml-[15px] text-[22px] font-medium">Open PI Redactor Tool</span>
                <SquareArrowOutUpRight className="ml-auto w-[22px] h-[22px]" strokeWidth={2} />
              </div>
              <div className="mt-[15px] text-[19.1px] leading-[25px] text-[#6b7280] whitespace-nowrap">The redactor runs entirely in your browser - no data is sent to external servers. Redacted files will automatically upload when<br />you're done.</div>
            </div>
          </div>
        </div>
      </div>
    </div>
  );
}

export default function App() {
  return (
    <div className="relative w-[2880px] h-[1864px] overflow-hidden bg-[#fcfcfc] flex flex-col font-['Roboto',sans-serif]">
      <div className="h-[58px] bg-black shrink-0" />
      <TabStrip />
      <Toolbar />
      <Bookmarks />
      <ReplitTop />
      <div className="flex flex-1 min-h-0">
        <LeftPanel />
        <RightPanel />
      </div>
      <Scribbles />
    </div>
  );
}
